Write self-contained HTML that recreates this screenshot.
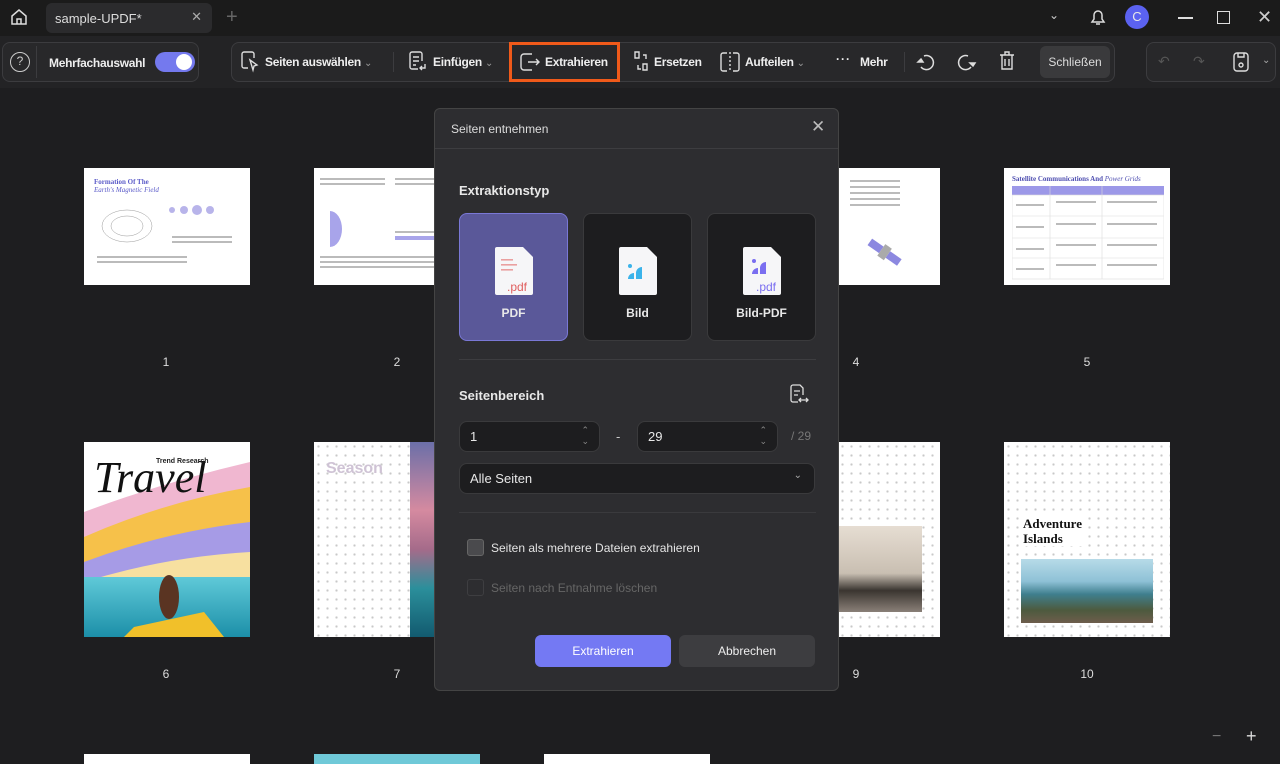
<!DOCTYPE html>
<html><head><meta charset="utf-8"><style>
*{box-sizing:border-box;margin:0;padding:0}
body{width:1280px;height:761px;overflow:hidden;background:#1e1e20;font-family:"Liberation Sans",sans-serif;color:#e8e8e8;position:relative}
.abs{position:absolute}
.title{left:0;top:0;width:1280px;height:36px;background:#1b1b1b}
.tab{left:46px;top:3px;width:166px;height:30px;background:#2b2b2d;border-radius:6px;font-size:13px;color:#ddd;padding:8px 9px}
.tb{top:36px;left:0;width:1280px;height:52px;background:#232325}
.grp{border:1px solid #3c3c3f;border-radius:8px;background:#28282a;height:40px;top:42px}
.lbl{font-size:12px;font-weight:bold;color:#eee;top:55px;letter-spacing:-0.3px;white-space:nowrap}
.page{background:#fff;position:absolute}
.num{position:absolute;font-size:12px;color:#ddd;width:20px;text-align:center}
.dlg{left:434px;top:108px;width:405px;height:583px;background:#2d2d30;border:1px solid #444;border-radius:6px}
.card{top:213px;width:109px;height:128px;border-radius:8px;background:#1d1d1f;border:1px solid #3a3a3c;text-align:center;font-size:12px;font-weight:bold;padding-top:92px}
.inp{background:#1d1d1f;border:1px solid #3a3a3c;border-radius:8px;height:31px;font-size:13px;padding:7px 10px}
.dot{background-image:radial-gradient(#c8c8c8 1px,transparent 1.3px);background-size:9px 9px}
</style></head><body>
<div class="abs title"></div>
<svg class="abs" style="left:8px;top:6px" width="22" height="22" viewBox="0 0 22 22" fill="none" stroke="#ddd" stroke-width="1.5"><path d="M4 10 11 4l7 6v8H4z"/><path d="M9 18v-5h4v5"/></svg>
<div class="abs tab">sample-UPDF*<span style="position:absolute;right:10px;top:6px;color:#aaa">✕</span></div>
<div class="abs" style="left:226px;top:6px;font-size:20px;color:#666">+</div>
<div class="abs" style="left:1049px;top:8px;font-size:12px;color:#ccc">⌄</div>
<svg class="abs" style="left:1089px;top:7px" width="18" height="20" viewBox="0 0 18 20" fill="none" stroke="#ddd" stroke-width="1.5"><path d="M3 15h12l-2-3V8a4 4 0 0 0-8 0v4z"/><path d="M7 17h4"/></svg>
<div class="abs" style="left:1125px;top:5px;width:24px;height:24px;border-radius:50%;background:#5b62f0;font-size:13px;text-align:center;line-height:24px">C</div>
<div class="abs" style="left:1178px;top:17px;width:15px;height:1.5px;background:#ddd"></div>
<div class="abs" style="left:1217px;top:11px;width:13px;height:13px;border:1.5px solid #ddd"></div>
<div class="abs" style="left:1257px;top:7px;font-size:18px;color:#ccc">✕</div>
<div class="abs tb"></div>
<div class="abs grp" style="left:2px;width:197px"></div>
<div class="abs" style="left:10px;top:52px;width:20px;height:20px;border:1.5px solid #ccc;border-radius:50%;font-size:12px;text-align:center;line-height:17px;color:#ccc">?</div>
<div class="abs" style="left:36px;top:46px;width:1px;height:32px;background:#3c3c3f"></div>
<div class="abs lbl" style="left:49px;top:56px">Mehrfachauswahl</div>
<div class="abs" style="left:155px;top:52px;width:40px;height:20px;border-radius:10px;background:#7479ee"><div style="position:absolute;right:3px;top:2px;width:16px;height:16px;border-radius:50%;background:#fff"></div></div>
<div class="abs grp" style="left:231px;width:884px"></div>
<svg class="abs" style="left:240px;top:50px" width="20" height="24" viewBox="0 0 20 24" fill="none" stroke="#ddd" stroke-width="1.4"><path d="M8 18H4a2 2 0 0 1-2-2V4a2 2 0 0 1 2-2h8a2 2 0 0 1 2 2v4"/><path d="M10 10l7 5-3 1-1 4z"/></svg>
<div class="abs lbl" style="left:265px">Seiten auswählen <span style="font-weight:normal;color:#999;font-size:10px">⌄</span></div>
<div class="abs" style="left:393px;top:52px;width:1px;height:20px;background:#3c3c3f"></div>
<svg class="abs" style="left:408px;top:50px" width="20" height="24" viewBox="0 0 20 24" fill="none" stroke="#ddd" stroke-width="1.4"><path d="M10 19H4a2 2 0 0 1-2-2V4a2 2 0 0 1 2-2h8a2 2 0 0 1 2 2v7"/><path d="M5 7h6M5 11h6M5 15h3"/><path d="M17 14v4h-5m2-2-2 2 2 2"/></svg>
<div class="abs lbl" style="left:433px">Einfügen <span style="font-weight:normal;color:#999;font-size:10px">⌄</span></div>
<div class="abs" style="left:509px;top:42px;width:111px;height:40px;border:3px solid #f05a1a"></div>
<svg class="abs" style="left:518px;top:50px" width="24" height="24" viewBox="0 0 24 24" fill="none" stroke="#ddd" stroke-width="1.4"><path d="M14 4H6a3 3 0 0 0-3 3v10a3 3 0 0 0 3 3h8"/><path d="M10 12h11m-3-3 3 3-3 3"/></svg>
<div class="abs lbl" style="left:545px">Extrahieren</div>
<svg class="abs" style="left:631px;top:50px" width="20" height="24" viewBox="0 0 20 24" fill="none" stroke="#ddd" stroke-width="1.4"><path d="M4 2h4v6H4zM12 14h4v6h-4z"/><path d="M12 5h3v4m-8 6v4h3"/></svg>
<div class="abs lbl" style="left:654px">Ersetzen</div>
<svg class="abs" style="left:719px;top:50px" width="22" height="24" viewBox="0 0 22 24" fill="none" stroke="#ddd" stroke-width="1.4"><path d="M8 3H4a2 2 0 0 0-2 2v14a2 2 0 0 0 2 2h4M14 3h4a2 2 0 0 1 2 2v14a2 2 0 0 1-2 2h-4"/><path d="M11 2v20" stroke-dasharray="2 2"/></svg>
<div class="abs lbl" style="left:745px">Aufteilen <span style="font-weight:normal;color:#999;font-size:10px">⌄</span></div>
<div class="abs lbl" style="left:836px;top:52px;letter-spacing:1px">···</div>
<div class="abs lbl" style="left:860px">Mehr</div>
<div class="abs" style="left:904px;top:52px;width:1px;height:20px;background:#3c3c3f"></div>
<svg class="abs" style="left:915px;top:50px" width="22" height="24" viewBox="0 0 22 24" fill="none" stroke="#ddd" stroke-width="1.5"><path d="M9 6a7 7 0 1 1-3 11"/><path d="M3 12l3-3 2 3z" fill="#ddd"/></svg>
<svg class="abs" style="left:955px;top:50px" width="22" height="24" viewBox="0 0 22 24" fill="none" stroke="#ddd" stroke-width="1.5"><path d="M13 6a7 7 0 1 0 3 11"/><path d="M15 13l3 3 2-3z" fill="#ddd"/></svg>
<svg class="abs" style="left:997px;top:49px" width="20" height="24" viewBox="0 0 20 24" fill="none" stroke="#ddd" stroke-width="1.4"><path d="M3 6h14M8 6V3h4v3M5 6v14h10V6M8 10v7M12 10v7"/></svg>
<div class="abs" style="left:1040px;top:46px;width:70px;height:32px;border-radius:6px;background:#3a3a3c;font-size:12px;color:#ddd;text-align:center;line-height:32px">Schließen</div>
<div class="abs grp" style="left:1146px;width:130px"></div>
<div class="abs" style="left:1158px;top:53px;color:#555;font-size:14px">↶</div>
<div class="abs" style="left:1193px;top:53px;color:#555;font-size:14px">↷</div>
<svg class="abs" style="left:1232px;top:51px" width="18" height="22" viewBox="0 0 18 22" fill="none" stroke="#ddd" stroke-width="1.4"><rect x="2" y="2" width="14" height="18" rx="3"/><path d="M6 2v4h6V2"/><circle cx="9" cy="14" r="2"/></svg>
<div class="abs" style="left:1262px;top:55px;color:#aaa;font-size:10px">⌄</div>

<!-- Row 1 -->
<div class="page" style="left:84px;top:168px;width:166px;height:117px">
<div style="position:absolute;left:10px;top:10px;font:bold 7px 'Liberation Serif',serif;color:#5a5ac8">Formation Of The<br><i style="font-weight:normal">Earth's Magnetic Field</i></div>
<svg style="position:absolute;left:8px;top:28px" width="150" height="80"><g fill="none" stroke="#999" stroke-width=".5"><ellipse cx="35" cy="30" rx="25" ry="16"/><ellipse cx="35" cy="30" rx="16" ry="10"/></g><g fill="#b8b4ea"><circle cx="80" cy="14" r="3"/><circle cx="92" cy="14" r="4"/><circle cx="105" cy="14" r="5"/><circle cx="118" cy="14" r="4"/></g><g fill="#bbb"><rect x="5" y="60" width="90" height="2"/><rect x="5" y="65" width="90" height="2"/><rect x="80" y="40" width="60" height="2"/><rect x="80" y="45" width="60" height="2"/></g></svg></div>
<div class="page" style="left:314px;top:168px;width:166px;height:117px">
<svg style="position:absolute;left:6px;top:8px" width="155" height="100"><g fill="#bbb"><rect x="0" y="2" width="65" height="2"/><rect x="0" y="7" width="65" height="2"/><rect x="75" y="2" width="65" height="2"/><rect x="75" y="7" width="65" height="2"/><rect x="75" y="55" width="65" height="2"/><rect x="0" y="80" width="150" height="2"/><rect x="0" y="85" width="150" height="2"/><rect x="0" y="90" width="150" height="2"/></g><path d="M10 35a12 18 0 0 1 0 36" fill="#a8a4ea"/><rect x="75" y="60" width="40" height="4" fill="#a8a4ea"/></svg></div>
<div class="page" style="left:838px;top:168px;width:102px;height:117px">
<svg style="position:absolute;left:8px;top:10px" width="90" height="100"><g fill="#bbb"><rect x="4" y="2" width="50" height="2"/><rect x="4" y="8" width="50" height="2"/><rect x="4" y="14" width="50" height="2"/><rect x="4" y="20" width="50" height="2"/><rect x="4" y="26" width="50" height="2"/></g><g transform="rotate(35 38 75)" fill="#8c88e0"><rect x="20" y="70" width="14" height="8"/><rect x="42" y="70" width="14" height="8"/><rect x="34" y="67" width="8" height="14" fill="#aaa"/></g></svg></div>
<div class="page" style="left:1004px;top:168px;width:166px;height:117px">
<div style="position:absolute;left:8px;top:7px;font:bold 7px 'Liberation Serif',serif;color:#4d4db0">Satellite Communications And <i style="font-weight:normal">Power Grids</i></div>
<svg style="position:absolute;left:8px;top:18px" width="152" height="94"><rect x="0" y="0" width="152" height="9" fill="#9c98e8"/><g stroke="#ddd" fill="none" stroke-width=".6"><rect x="0" y="9" width="152" height="84"/><path d="M38 0v93M90 0v93M0 30h152M0 52h152M0 72h152"/></g><g fill="#bbb"><rect x="4" y="18" width="28" height="2"/><rect x="44" y="15" width="40" height="2"/><rect x="95" y="15" width="50" height="2"/><rect x="4" y="40" width="28" height="2"/><rect x="44" y="37" width="40" height="2"/><rect x="95" y="37" width="50" height="2"/><rect x="4" y="62" width="28" height="2"/><rect x="44" y="58" width="40" height="2"/><rect x="95" y="58" width="50" height="2"/><rect x="4" y="82" width="28" height="2"/><rect x="44" y="78" width="40" height="2"/><rect x="95" y="78" width="50" height="2"/></g></svg></div>
<div class="num" style="left:156px;top:355px">1</div>
<div class="num" style="left:387px;top:355px">2</div>
<div class="num" style="left:846px;top:355px">4</div>
<div class="num" style="left:1077px;top:355px">5</div>

<!-- Row 2 -->
<div class="page" style="left:84px;top:442px;width:166px;height:195px;overflow:hidden">
<svg width="166" height="195"><defs><linearGradient id="sea" x1="0" y1="0" x2="0" y2="1"><stop offset="0" stop-color="#5fc9d8"/><stop offset="1" stop-color="#1c8fa8"/></linearGradient></defs>
<path d="M0 70 Q80 40 166 20 V150 H0z" fill="#f0b7d0"/><path d="M0 95 Q80 60 166 45 V150 H0z" fill="#f6c14a"/><path d="M0 120 Q80 90 166 80 V150 H0z" fill="#a69be6"/><path d="M0 140 Q80 115 166 110 V150 H0z" fill="#f7e0a0"/>
<rect y="135" width="166" height="60" fill="url(#sea)"/><path d="M50 185 L120 170 L140 195 H40z" fill="#f1c02a"/><ellipse cx="85" cy="155" rx="10" ry="22" fill="#5a3422"/></svg>
<div style="position:absolute;left:10px;top:10px;font:italic 44px 'Liberation Serif',serif;color:#111">Travel</div>
<div style="position:absolute;left:72px;top:16px;font:bold 7px 'Liberation Sans',sans-serif;color:#222">Trend Research</div></div>
<div class="page dot" style="left:314px;top:442px;width:166px;height:195px">
<div style="position:absolute;left:12px;top:18px;font:bold 16px 'Liberation Sans',sans-serif;color:#cfc3d5">Season</div>
<div style="position:absolute;left:96px;top:0;width:70px;height:195px;background:linear-gradient(#6b6fa8,#d58aa0 35%,#a56b8a 55%,#2b8f9b 75%,#125a6f)"></div></div>
<div class="page dot" style="left:838px;top:442px;width:102px;height:195px">
<div style="position:absolute;left:0;top:84px;width:84px;height:86px;background:linear-gradient(#e6ddd2,#c9bfb2 55%,#3a3530 75%,#8a8078)"></div></div>
<div class="page dot" style="left:1004px;top:442px;width:166px;height:195px">
<div style="position:absolute;left:19px;top:74px;font:bold 13px 'Liberation Serif',serif;color:#111;line-height:15px;background:#fff">Adventure<br>Islands</div>
<div style="position:absolute;left:17px;top:117px;width:132px;height:64px;background:linear-gradient(#b7dbe8,#8ec1d6 35%,#3f7f8e 55%,#4d5a3e 80%,#6e5d4c)"></div></div>
<div class="num" style="left:156px;top:667px">6</div>
<div class="num" style="left:387px;top:667px">7</div>
<div class="num" style="left:846px;top:667px">9</div>
<div class="num" style="left:1077px;top:667px">10</div>
<div class="page" style="left:84px;top:754px;width:166px;height:10px"></div>
<div class="page" style="left:314px;top:754px;width:166px;height:10px;background:#6fc9d8"></div>
<div class="page" style="left:544px;top:754px;width:166px;height:10px"></div>
<div class="abs" style="left:1212px;top:728px;color:#777;font-size:16px">−</div>
<div class="abs" style="left:1246px;top:726px;color:#ddd;font-size:18px">+</div>

<!-- Dialog -->
<div class="abs dlg"></div>
<div class="abs" style="left:451px;top:122px;font-size:12px;color:#ddd">Seiten entnehmen</div>
<div class="abs" style="left:811px;top:117px;font-size:17px;color:#bbb">✕</div>
<div class="abs" style="left:435px;top:148px;width:403px;height:1px;background:#3d3d40"></div>
<div class="abs" style="left:459px;top:183px;font-size:13px;font-weight:bold">Extraktionstyp</div>
<div class="abs card" style="left:459px;background:#5a5899;border-color:#7a78d6">PDF</div>
<div class="abs card" style="left:583px">Bild</div>
<div class="abs card" style="left:707px">Bild-PDF</div>
<svg class="abs" style="left:494px;top:247px" width="40" height="48"><path d="M3 0h26l10 10v36a2 2 0 0 1-2 2H3a2 2 0 0 1-2-2V2a2 2 0 0 1 2-2z" fill="#f6f6f8"/><g fill="#eaa0a0"><rect x="7" y="12" width="12" height="1.6"/><rect x="7" y="17" width="16" height="1.6"/><rect x="7" y="22" width="12" height="1.6"/></g><text x="13" y="44" font-size="12" font-family="Liberation Sans" fill="#e06060">.pdf</text></svg>
<svg class="abs" style="left:618px;top:247px" width="40" height="48"><path d="M3 0h26l10 10v36a2 2 0 0 1-2 2H3a2 2 0 0 1-2-2V2a2 2 0 0 1 2-2z" fill="#f6f6f8"/><circle cx="12" cy="19" r="2" fill="#3bb3ea"/><path d="M10 32a6 6 0 0 1 6-6v6zM18 32v-6a6 6 0 0 1 6-6v12z" fill="#3bb3ea"/></svg>
<svg class="abs" style="left:742px;top:247px" width="40" height="48"><path d="M3 0h26l10 10v36a2 2 0 0 1-2 2H3a2 2 0 0 1-2-2V2a2 2 0 0 1 2-2z" fill="#f6f6f8"/><circle cx="12" cy="14" r="2" fill="#7a6ef0"/><path d="M10 27a6 6 0 0 1 6-6v6zM18 27v-6a6 6 0 0 1 6-6v12z" fill="#7a6ef0"/><text x="14" y="44" font-size="12" font-family="Liberation Sans" fill="#7a6ef0">.pdf</text></svg>
<div class="abs" style="left:459px;top:359px;width:357px;height:1px;background:#3d3d40"></div>
<div class="abs" style="left:459px;top:388px;font-size:13px;font-weight:bold">Seitenbereich</div>
<svg class="abs" style="left:788px;top:383px" width="22" height="22" viewBox="0 0 22 22" fill="none" stroke="#ddd" stroke-width="1.3"><path d="M10 19H5a2 2 0 0 1-2-2V4a2 2 0 0 1 2-2h7l3 3v7"/><path d="M6 8h6M6 12h4M11 17h9m-2-2 2 2-2 2m-5-4-2 2 2 2"/></svg>
<div class="abs inp" style="left:459px;top:421px;width:141px">1<span style="position:absolute;right:10px;top:3px;font-size:9px;color:#888;line-height:11px">⌃<br>⌄</span></div>
<div class="abs" style="left:616px;top:429px;font-size:13px;color:#ccc">-</div>
<div class="abs inp" style="left:637px;top:421px;width:141px">29<span style="position:absolute;right:10px;top:3px;font-size:9px;color:#888;line-height:11px">⌃<br>⌄</span></div>
<div class="abs" style="left:791px;top:429px;font-size:12px;color:#777">/ 29</div>
<div class="abs inp" style="left:459px;top:463px;width:356px">Alle Seiten<span style="position:absolute;right:12px;top:6px;font-size:10px;color:#aaa">⌄</span></div>
<div class="abs" style="left:459px;top:512px;width:357px;height:1px;background:#3a3a3d"></div>
<div class="abs" style="left:467px;top:539px;width:17px;height:17px;border-radius:3px;background:#4a4a4d;border:1px solid #666"></div>
<div class="abs" style="left:491px;top:541px;font-size:12px;color:#e4e4e4">Seiten als mehrere Dateien extrahieren</div>
<div class="abs" style="left:467px;top:579px;width:17px;height:17px;border-radius:3px;border:1px solid #3e3e41"></div>
<div class="abs" style="left:491px;top:581px;font-size:12px;color:#666">Seiten nach Entnahme löschen</div>
<div class="abs" style="left:535px;top:635px;width:136px;height:32px;border-radius:6px;background:#7479f3;font-size:12px;color:#fff;text-align:center;line-height:32px">Extrahieren</div>
<div class="abs" style="left:679px;top:635px;width:136px;height:32px;border-radius:6px;background:#3d3d40;font-size:12px;color:#eee;text-align:center;line-height:32px">Abbrechen</div>
</body></html>
